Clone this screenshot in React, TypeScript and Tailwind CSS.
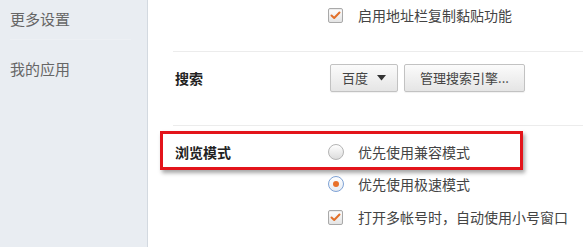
import { ChevronDown } from "lucide-react";

const cjk = { fontFamily: '"Noto Sans CJK SC", "Noto Sans", sans-serif' };

function Checkbox() {
  return (
    <span className="w-[15px] h-[15px] shrink-0 rounded-[2px] border border-[#a9a9a9] bg-gradient-to-b from-[#ffffff] to-[#e4e4e4] flex items-center justify-center shadow-[inset_0_1px_1px_rgba(0,0,0,0.08)]">
      <svg width="11" height="9" viewBox="0 0 11 9" fill="none">
        <path d="M1.5 4.5 L4.2 7 L9.5 1.5" stroke="#e2702a" strokeWidth="2" strokeLinecap="round" strokeLinejoin="round" />
      </svg>
    </span>
  );
}

function Radio({ checked }: { checked?: boolean }) {
  return (
    <span
      className={
        checked
          ? "w-[16px] h-[16px] shrink-0 rounded-full border border-[#7fa3d6] bg-gradient-to-b from-[#ffffff] to-[#e6ebf2] flex items-center justify-center"
          : "w-[16px] h-[16px] shrink-0 rounded-full border border-[#b4b4b4] bg-gradient-to-b from-[#ffffff] to-[#dcdcdc]"
      }
    >
      {checked && <span className="w-[6px] h-[6px] rounded-full bg-[#e8702a]" />}
    </span>
  );
}

function Btn({ children, wide }: { children: React.ReactNode; wide?: boolean }) {
  return (
    <button
      type="button"
      className={
        wide
          ? "h-[28px] px-[15px] rounded-[2px] border border-[#c2c2c2] bg-gradient-to-b from-[#fbfbfb] to-[#e5e5e5] text-[13px] text-[#444] flex items-center shadow-[0_1px_1px_rgba(0,0,0,0.06)]"
          : "h-[28px] px-[11px] rounded-[2px] border border-[#c2c2c2] bg-gradient-to-b from-[#fbfbfb] to-[#e5e5e5] text-[13px] text-[#444] flex items-center gap-[9px] shadow-[0_1px_1px_rgba(0,0,0,0.06)]"
      }
    >
      {children}
    </button>
  );
}

export default function App() {
  return (
    <div className="w-[583px] h-[247px] flex overflow-hidden bg-white" style={cjk}>
      {/* Sidebar */}
      <div className="w-[148px] h-full shrink-0 bg-[#e9edf2] border-r border-[#d3d9e0] pl-[10px] pr-[16px]">
        <div className="h-[40px] flex items-center text-[15px] text-[#666] border-b border-[#edf0f4]">
          更多设置
        </div>
        <div className="h-[58px] flex items-center text-[15px] text-[#666]">
          我的应用
        </div>
      </div>

      {/* Main */}
      <div className="flex-1 pl-[25px] relative">
        <div className="h-[30px] flex items-center pl-[155px] gap-[15px]">
          <Checkbox />
          <span className="text-[14px] text-[#444]">启用地址栏复制黏贴功能</span>
        </div>

        <div className="mt-[21px] border-t border-[#ececec] pt-[12px] pb-[33px] flex items-center">
          <div className="w-[157px] pl-[2px] text-[14px] font-bold text-[#222]">搜索</div>
          <div className="flex items-center gap-[6px]">
            <Btn>
              百度
              <svg width="9" height="6" viewBox="0 0 9 6">
                <path d="M0 0 H9 L4.5 5.5 Z" fill="#333" />
              </svg>
            </Btn>
            <Btn wide>管理搜索引擎...</Btn>
          </div>
        </div>

        <div className="border-t border-[#ececec] pt-[10px]">
          <div className="h-[32px] flex items-center">
            <div className="w-[155px] pl-[2px] text-[14px] font-bold text-[#222]">浏览模式</div>
            <div className="flex items-center gap-[14px]">
              <Radio />
              <span className="text-[14px] text-[#444]">优先使用兼容模式</span>
            </div>
          </div>
          <div className="h-[32px] flex items-center pl-[155px] gap-[14px]">
            <Radio checked />
            <span className="text-[14px] text-[#444]">优先使用极速模式</span>
          </div>
          <div className="h-[34px] flex items-center pl-[155px] gap-[15px]">
            <Checkbox />
            <span className="text-[14px] text-[#444]">打开多帐号时，自动使用小号窗口</span>
          </div>
        </div>

        {/* annotation highlight */}
        <div className="absolute left-[12px] top-[131px] w-[363px] h-[39px] border-[3px] border-[#e3141b] shadow-[2px_3px_4px_rgba(0,0,0,0.35)] pointer-events-none" />
      </div>
    </div>
  );
}
